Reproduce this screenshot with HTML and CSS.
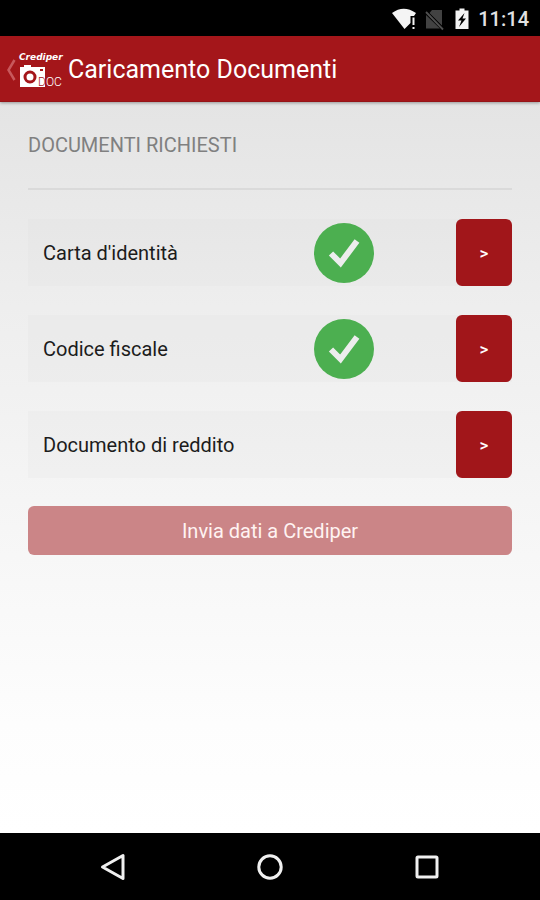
FILE: index.html
```html
<!DOCTYPE html>
<html lang="it">
<head>
<meta charset="utf-8">
<meta name="viewport" content="width=device-width, initial-scale=1">
<title>Caricamento Documenti</title>
<link rel="stylesheet" href="styles.css">
</head>
<body>
<div class="status-bar">
  <svg class="status-icons" width="80" height="24" viewBox="0 0 80 24" aria-hidden="true">
    <path fill="#f4f4f4" d="M0 6Q11.500-2.500 24 6L22 9H18.500V16L12.500 22z"/>
    <path fill="#f4f4f4" d="M20.500 10.500h2v7.500h-2zM20.500 20h2v2h-2z"/>
    <path fill="#424242" d="M40 3h10v15.500L37.500 6zM34 8l14 13.500H34z"/>
    <path stroke="#505050" stroke-width="1.800" d="M34 5l17 17.500"/>
    <path fill="#f4f4f4" d="M67.500 1.500h5v2h4v18.500h-13v-18.500h4z"/>
    <path fill="#000" d="M72.500 6L66 13.500h3.500l-2.500 6.500 7-8.500h-3.500z"/>
  </svg>
  <time class="clock">11:14</time>
</div>
<header class="app-bar">
  <a class="home" href="#" aria-label="Indietro">
    <svg width="10" height="22" viewBox="0 0 10 22" aria-hidden="true"><path fill="none" stroke="#c8585c" stroke-width="2.500" d="M8.500 1L2.500 11l6 10"/></svg>
    <svg class="logo" width="46" height="38" viewBox="0 0 46 38" role="img" aria-label="Crediper DOC">
      <text class="brand" x="1" y="9">Crediper</text>
      <path fill="#fff" d="M6 14h7v2h14v20H2V16h4z"/>
      <circle cx="12" cy="26" r="5" fill="none" stroke="#a4161a" stroke-width="3"/>
      <path fill="#a4161a" d="M22 18h3v2h-3z"/>
      <text class="doc" x="20" y="35"><tspan class="doc-d">D</tspan>OC</text>
    </svg>
  </a>
  <h1>Caricamento Documenti</h1>
</header>
<main>
  <h2>DOCUMENTI RICHIESTI</h2>
  <ul class="documents">
    <li class="document">
      <span class="name">Carta d'identità</span>
      <svg class="check" viewBox="0 0 60 60" role="img" aria-label="Caricato"><circle cx="30" cy="30" r="30" fill="#4caf50"/><path fill="none" stroke="#ededed" stroke-width="6" d="M17 30.500l9.500 9.500L43 18"/></svg>
      <button class="open" type="button" aria-label="Apri Carta d'identità">&gt;</button>
    </li>
    <li class="document">
      <span class="name">Codice fiscale</span>
      <svg class="check" viewBox="0 0 60 60" role="img" aria-label="Caricato"><circle cx="30" cy="30" r="30" fill="#4caf50"/><path fill="none" stroke="#ededed" stroke-width="6" d="M17 30.500l9.500 9.500L43 18"/></svg>
      <button class="open" type="button" aria-label="Apri Codice fiscale">&gt;</button>
    </li>
    <li class="document">
      <span class="name">Documento di reddito</span>
      <button class="open" type="button" aria-label="Apri Documento di reddito">&gt;</button>
    </li>
  </ul>
  <button class="send" type="button" disabled>Invia dati a Crediper</button>
</main>
<nav class="nav-bar">
  <button type="button" aria-label="Indietro"><svg width="28" height="28" viewBox="0 0 28 28"><path d="M24 2.500v23L3.500 14z"/></svg></button>
  <button type="button" aria-label="Home"><svg width="28" height="28" viewBox="0 0 28 28"><circle cx="14" cy="14" r="11.200"/></svg></button>
  <button type="button" aria-label="Recenti"><svg width="28" height="28" viewBox="0 0 28 28"><rect x="4" y="4" width="20" height="20" rx="1"/></svg></button>
</nav>
</body>
</html>
```
FILE: styles.css
```css
* {
  box-sizing: border-box;
}

body {
  margin: 0;
  min-height: 100vh;
  display: flex;
  flex-direction: column;
  background: #fff;
  color: #1c1c1c;
  font-family: Roboto, "Liberation Sans", sans-serif;
}

button {
  border: 0;
  padding: 0;
  font-family: inherit;
}

svg {
  display: block;
}

.status-bar {
  height: 36px;
  padding: 2px 11px 0;
  display: flex;
  align-items: center;
  justify-content: flex-end;
  gap: 6px;
  background: #000;
}

.clock {
  color: #e2e2e2;
  font-size: 20px;
  font-weight: 500;
  line-height: 24px;
}

.app-bar {
  height: 66px;
  padding: 3px 0 0 6px;
  display: flex;
  align-items: center;
  gap: 4px;
  background: #a4161a;
  border-bottom: 1px solid #961418;
  box-shadow: 0 1px 3px rgba(0, 0, 0, 0.35);
  color: #fff;
  z-index: 1;
}

.home {
  display: flex;
  align-items: center;
  gap: 2px;
}

.brand {
  fill: #fff;
  font: italic 700 9px "DejaVu Sans", sans-serif;
}

.doc {
  fill: #fff;
  font: 300 12px Roboto, sans-serif;
}

.doc-d {
  fill: #a4161a;
}

h1 {
  margin: 0;
  font-size: 25px;
  font-weight: 400;
  line-height: 32px;
}

main {
  flex: 1;
  padding: 30px 28px;
  background: linear-gradient(#e4e4e4, #eeeeee 28%, #f7f7f7 62%, #fdfdfd 85%, #fff);
}

h2 {
  margin: 0 0 29px;
  padding-bottom: 30px;
  border-bottom: 2px solid #dadada;
  color: #808080;
  font-size: 20px;
  font-weight: 400;
  line-height: 26px;
}

.documents {
  margin: 0 0 28px;
  padding: 0;
  display: grid;
  gap: 29px;
  list-style: none;
}

.document {
  padding-left: 15px;
  display: grid;
  grid-template-columns: 271px 1fr 56px;
  align-items: center;
  background: rgba(220, 220, 220, 0.17);
}

.name {
  font-size: 20px;
  line-height: 26px;
}

.check {
  width: 60px;
  height: 60px;
}

.open {
  grid-column: 3;
  height: 67px;
  border-radius: 6px;
  background: #a1161a;
  color: #fff;
  font-size: 17px;
  font-weight: 500;
}

.send {
  width: 100%;
  height: 49px;
  border-radius: 6px;
  background: #cb8587;
  color: #fff3f2;
  font-size: 20px;
}

.nav-bar {
  height: 67px;
  padding: 0 34px;
  display: grid;
  grid-template-columns: repeat(3, 1fr);
  background: #000;
}

.nav-bar button {
  display: grid;
  place-items: center;
  background: none;
}

.nav-bar svg {
  fill: none;
  stroke: #f0f0f0;
  stroke-width: 3;
  stroke-linejoin: round;
}
```
